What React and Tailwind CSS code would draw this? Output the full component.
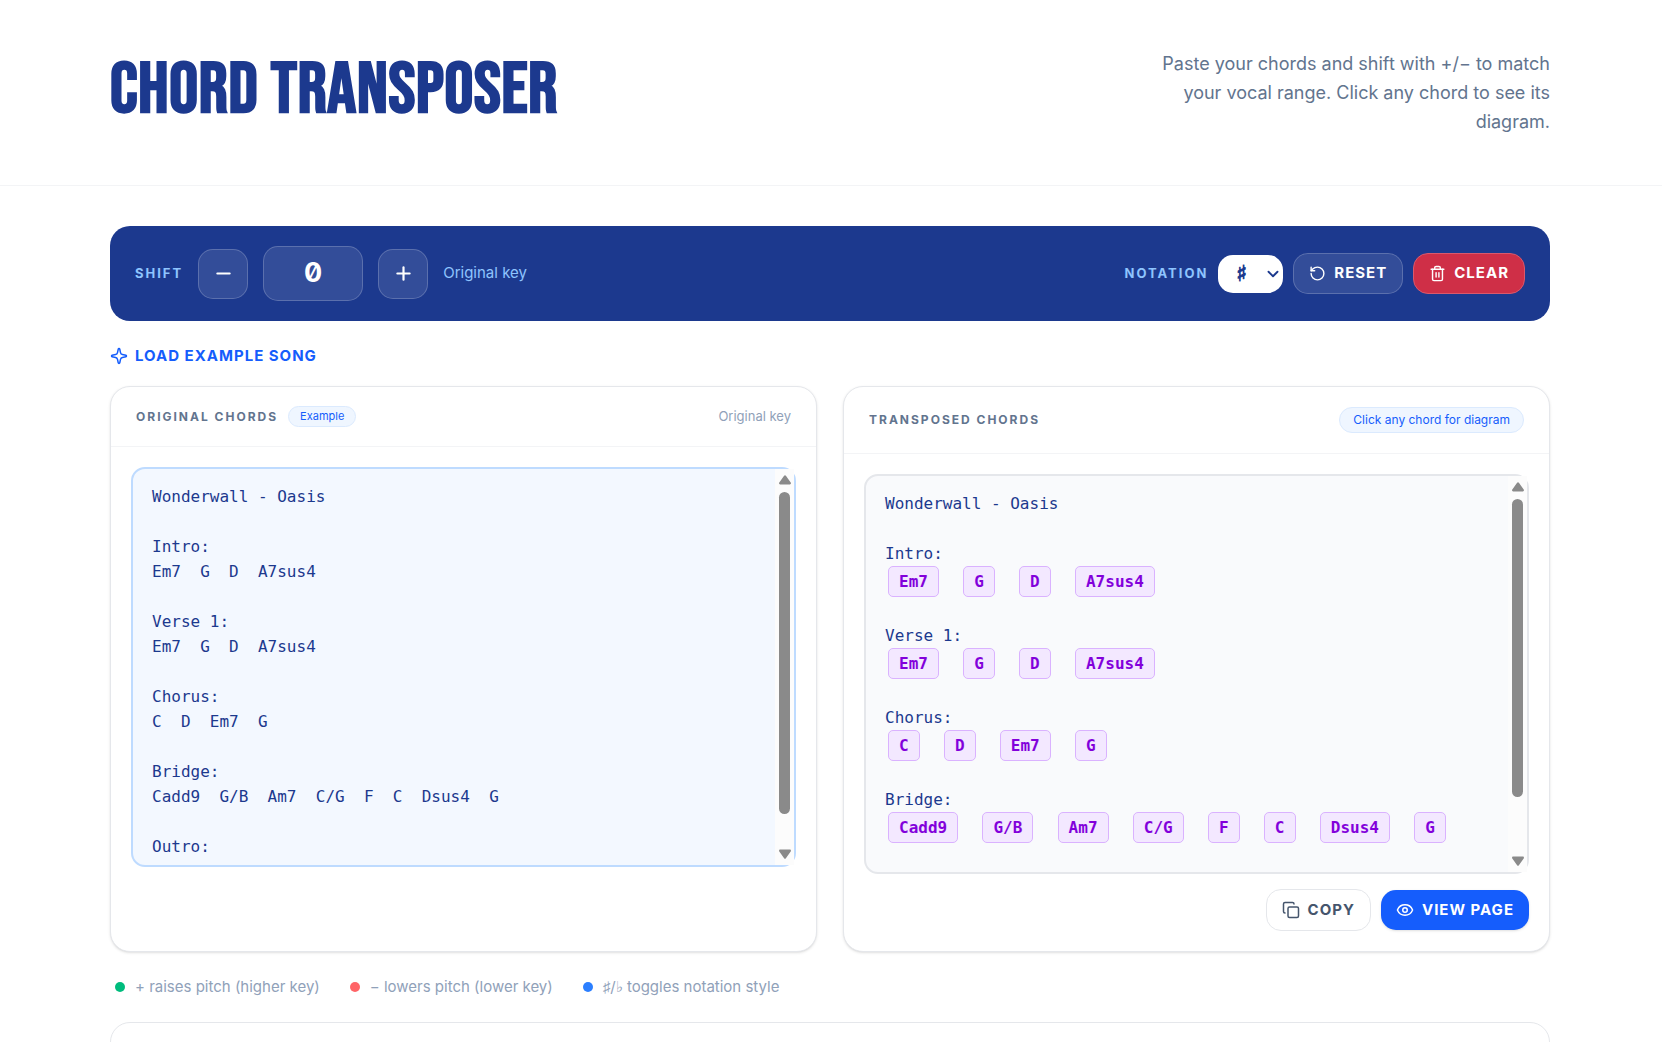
import { useState } from "react";
import { Minus, Plus, RotateCcw, Trash2, Copy, Eye, ChevronDown } from "lucide-react";

const SONG = [
  "Wonderwall - Oasis",
  "",
  "Intro:",
  "Em7  G  D  A7sus4",
  "",
  "Verse 1:",
  "Em7  G  D  A7sus4",
  "",
  "Chorus:",
  "C  D  Em7  G",
  "",
  "Bridge:",
  "Cadd9  G/B  Am7  C/G  F  C  Dsus4  G",
  "",
  "Outro:",
  "Em7  G  D  A7sus4",
];

const CHORD = /^[A-G][#b]?(m|maj|add|sus|dim)?\d*(sus\d)?(\/[A-G])?$/;

function isChordLine(line) {
  return line !== "" && line.split(/\s+/).every((word) => CHORD.test(word));
}

function Sparkle() {
  return (
    <svg viewBox="0 0 24 24" className="size-[18px]" fill="none" stroke="currentColor" strokeWidth="2" strokeLinecap="round" strokeLinejoin="round" aria-hidden="true">
      <path d="M12 2c.5 0 .9.3 1 .8l1 4.600a3.500 3.500 0 0 0 2.600 2.600l4.600 1c1 .2 1 1.800 0 2l-4.600 1a3.500 3.500 0 0 0-2.600 2.600l-1 4.600c-.2 1-1.800 1-2 0l-1-4.600a3.500 3.500 0 0 0-2.600-2.600l-4.600-1c-1-.2-1-1.800 0-2l4.600-1a3.500 3.500 0 0 0 2.600-2.600l1-4.600c.1-.5.5-.8 1-.8z" />
    </svg>
  );
}

function ScrollTrack({ thumb }) {
  return (
    <div className="flex w-[19px] shrink-0 flex-col items-center bg-[#fcfcfc] py-[6px] text-[#8a8a8a]" aria-hidden="true">
      <svg viewBox="0 0 12 10" className="h-[10px] w-3 shrink-0" fill="currentColor">
        <path d="M5.100.8a1.100 1.100 0 0 1 1.800 0l4.800 6.800c.6.800.1 1.900-.9 1.900H1.200c-1 0-1.500-1.100-.9-1.900z" />
      </svg>
      <div className="flex min-h-0 w-[11px] grow flex-col pt-[7px]">
        <div className={`${thumb} w-full rounded-full bg-[#8a8a8a]`} />
      </div>
      <svg viewBox="0 0 12 10" className="h-[10px] w-3 shrink-0" fill="currentColor">
        <path d="M5.100 9.200a1.100 1.100 0 0 0 1.800 0l4.800-6.800c.6-.8.1-1.900-.9-1.900H1.200c-1 0-1.500 1.100-.9 1.900z" />
      </svg>
    </div>
  );
}

function TransposedLine({ line }) {
  if (!isChordLine(line)) {
    return <div className="h-[25px] whitespace-pre">{line}</div>;
  }
  return (
    <div className="flex h-8 items-start whitespace-pre">
      {line.split(/(\s+)/).map((part, i) =>
        part.trim() === "" ? (
          <span key={i}>{part}</span>
        ) : (
          <button key={i} type="button" className="mr-[2px] ml-[3px] rounded-[5px] border border-purple-300 bg-purple-100 px-[10px] py-[2px] font-bold text-purple-700">
            {part}
          </button>
        )
      )}
    </div>
  );
}

function LegendItem({ dot, children }) {
  return (
    <li className="flex items-center gap-[10px]">
      <span className={`size-[10px] rounded-full ${dot}`} />
      {children}
    </li>
  );
}

export default function App() {
  const [text, setText] = useState(SONG.join("\n"));
  const [notation, setNotation] = useState("sharp");

  return (
    <div className="h-screen overflow-hidden bg-white font-['Inter',sans-serif] text-[15px] text-slate-500">
      <header className="border-b border-gray-100 pr-[2px]">
        <div className="mx-auto flex max-w-[1440px] items-start justify-between pt-[49px] pb-[49px]">
          <h1 className="pt-[6px] font-['Bebas_Neue','Roboto_Condensed','Liberation_Sans_Narrow',sans-serif] text-[72px] leading-[72px] font-bold tracking-[0.01em] text-blue-900 uppercase">
            Chord Transposer
          </h1>
          <p className="w-[394px] text-right text-[18px] leading-[29px]">
            Paste your chords and shift with +/− to match your vocal range. Click any chord to see its diagram.
          </p>
        </div>
      </header>

      <div className="pr-[2px]">
        <main className="mx-auto max-w-[1440px] pt-10">
          <section className="flex items-center justify-between rounded-[20px] bg-blue-900 px-[25px] py-5" aria-label="Transpose controls">
            <div className="flex items-center gap-[15px]">
              <span className="text-[13px] font-bold tracking-[2px] text-blue-300">SHIFT</span>
              <button type="button" aria-label="Shift down" className="flex size-[50px] items-center justify-center rounded-[15px] border border-white/20 bg-white/10 text-white">
                <Minus className="size-[21px]" strokeWidth={2.5} />
              </button>
              <output className="flex h-[55px] w-[100px] items-center justify-center rounded-[15px] border border-white/20 bg-white/10 text-[27px] font-bold text-white slashed-zero">
                0
              </output>
              <button type="button" aria-label="Shift up" className="flex size-[50px] items-center justify-center rounded-[15px] border border-white/20 bg-white/10 text-white">
                <Plus className="size-[21px]" strokeWidth={2.5} />
              </button>
              <span className="text-blue-300">Original key</span>
            </div>
            <div className="flex items-center gap-[10px]">
              <label htmlFor="notation" className="text-[13px] font-bold tracking-[2px] text-blue-300">NOTATION</label>
              <div className="relative">
                <select id="notation" value={notation} onChange={(e) => setNotation(e.target.value)} className="block h-[38px] w-[65px] appearance-none rounded-[15px] bg-white pr-3 pl-[18px] font-['DejaVu_Sans',sans-serif] text-[22px] leading-[38px] font-bold text-blue-900 [-webkit-text-stroke:1px_#1c398e]">
                  <option value="sharp">♯</option>
                  <option value="flat">♭</option>
                </select>
                <ChevronDown className="pointer-events-none absolute top-[10px] right-px size-[18px] text-blue-900" strokeWidth={2.5} />
              </div>
              <button type="button" className="flex h-[41px] items-center gap-2 rounded-[15px] border border-white/20 bg-white/10 px-[15px] font-bold tracking-[1px] text-white">
                <RotateCcw className="size-[17px]" />
                RESET
              </button>
              <button type="button" className="flex h-[41px] items-center gap-2 rounded-[15px] border border-[#d9596c] bg-[#cf2f47] px-[15px] font-bold tracking-[1px] text-white">
                <Trash2 className="size-[17px]" />
                CLEAR
              </button>
            </div>
          </section>

          <button type="button" className="mt-[23px] flex items-center gap-[7px] text-[15px] leading-6 font-bold tracking-[1px] text-blue-600">
            <Sparkle />
            LOAD EXAMPLE SONG
          </button>

          <div className="mt-[18px] grid grid-cols-2 gap-[26px]">
            <section className="rounded-[20px] border border-gray-200 bg-white shadow-sm">
              <div className="flex h-[60px] items-center justify-between border-b border-gray-100 px-[25px]">
                <div className="flex items-center gap-[10px]">
                  <label htmlFor="original" className="text-[12px] font-bold tracking-[2px]">ORIGINAL CHORDS</label>
                  <span className="rounded-full border border-blue-100 bg-blue-50 px-[11px] text-[11px] leading-[19px] text-blue-600">Example</span>
                </div>
                <span className="text-[13px] text-slate-400">Original key</span>
              </div>
              <div className="p-5">
                <div className="flex h-[400px] rounded-[14px] border-2 border-blue-200 bg-[#f3f8ff]">
                  <textarea
                    id="original"
                    value={text}
                    onChange={(e) => setText(e.target.value)}
                    spellCheck={false}
                    className="min-w-0 grow resize-none overflow-hidden bg-transparent px-[19px] pt-[15px] font-['DejaVu_Sans_Mono',monospace] text-[16px] leading-[25px] text-blue-900 outline-none"
                  />
                  <ScrollTrack thumb="h-[322px]" />
                </div>
              </div>
            </section>

            <section className="rounded-[20px] border border-gray-200 bg-white shadow-sm">
              <div className="flex h-[67px] items-center justify-between border-b border-gray-100 px-[25px]">
                <h2 className="text-[12px] font-bold tracking-[2px]">TRANSPOSED CHORDS</h2>
                <span className="rounded-full border border-blue-100 bg-blue-50 px-[13px] text-[12px] leading-6 text-blue-600">Click any chord for diagram</span>
              </div>
              <div className="p-5">
                <div className="flex h-[400px] rounded-[14px] border-2 border-gray-200 bg-[#f9fafc]">
                  <div className="min-w-0 grow overflow-hidden px-[19px] pt-[15px] font-['DejaVu_Sans_Mono',monospace] text-[16px] leading-[25px] text-blue-900">
                    {SONG.slice(0, 13).map((line, i) => (
                      <TransposedLine key={i} line={line} />
                    ))}
                  </div>
                  <ScrollTrack thumb="h-[298px]" />
                </div>
                <div className="mt-[15px] flex items-center justify-end gap-[10px]">
                  <button type="button" className="flex h-[42px] items-center gap-2 rounded-[15px] border border-gray-200 bg-white px-[15px] font-bold tracking-[1px] text-slate-600">
                    <Copy className="size-[18px]" />
                    COPY
                  </button>
                  <button type="button" className="flex h-10 items-center gap-2 rounded-[15px] bg-[#155dfc] px-[15px] font-bold tracking-[1px] text-white shadow-sm">
                    <Eye className="size-[18px]" />
                    VIEW PAGE
                  </button>
                </div>
              </div>
            </section>
          </div>

          <ul className="mt-[23px] flex items-center gap-[30px] px-[5px] leading-6 text-slate-400">
            <LegendItem dot="bg-[#00bc7d]">+ raises pitch (higher key)</LegendItem>
            <LegendItem dot="bg-[#ff6467]">− lowers pitch (lower key)</LegendItem>
            <LegendItem dot="bg-[#2b7fff]">♯/♭ toggles notation style</LegendItem>
          </ul>

          <section className="mt-[23px] h-40 rounded-[20px] border border-gray-200 bg-white" />
        </main>
      </div>
    </div>
  );
}
